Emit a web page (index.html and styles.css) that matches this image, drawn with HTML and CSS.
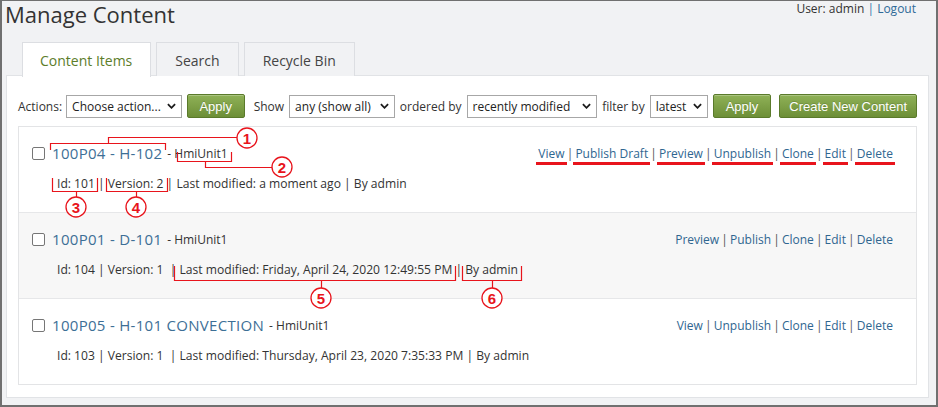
FILE: index.html
```html
<!DOCTYPE html>
<html lang="en">
<head>
<meta charset="utf-8">
<title>Manage Content</title>
<link rel="stylesheet" href="styles.css">
</head>
<body>
<div class="frame">
  <header class="top">
    <h1 class="title">Manage Content</h1>
    <div class="user">User: admin <span class="bar">|</span> <a class="link" href="#">Logout</a></div>
  </header>
  <nav class="tabs">
    <div class="tab active">Content Items</div>
    <div class="tab">Search</div>
    <div class="tab">Recycle Bin</div>
  </nav>
  <section class="panel">
    <div class="toolbar">
      <span class="lbl">Actions:</span>
      <span class="sel w1"><select><option>Choose action...</option></select><svg class="chev" viewBox="0 0 10 6"><path d="M1 1l4 4 4-4"/></svg></span>
      <button class="btn b-apply">Apply</button>
      <span class="lbl l-show">Show</span>
      <span class="sel w2"><select><option>any (show all)</option></select><svg class="chev" viewBox="0 0 10 6"><path d="M1 1l4 4 4-4"/></svg></span>
      <span class="lbl l-mid">ordered by</span>
      <span class="sel w3"><select><option>recently modified</option></select><svg class="chev" viewBox="0 0 10 6"><path d="M1 1l4 4 4-4"/></svg></span>
      <span class="lbl l-mid">filter by</span>
      <span class="sel w4"><select><option>latest</option></select><svg class="chev" viewBox="0 0 10 6"><path d="M1 1l4 4 4-4"/></svg></span>
      <button class="btn b-apply2">Apply</button>
      <button class="btn b-create">Create New Content</button>
    </div>
    <ul class="list">
      <li class="row">
        <div class="line">
          <span class="cb"></span>
          <a class="name" href="#">100P04 - H-102</a>
          <span class="type">- HmiUnit1</span>
          <span class="actions">
            <a class="act mark" href="#">View</a> | <a class="act mark" href="#">Publish Draft</a> | <a class="act mark" href="#">Preview</a> | <a class="act mark" href="#">Unpublish</a> | <a class="act mark" href="#">Clone</a> | <a class="act mark" href="#">Edit</a> | <a class="act mark" href="#">Delete</a>
          </span>
        </div>
        <div class="meta">Id: 101 | Version: 2 | Last modified: a moment ago | By admin</div>
      </li>
      <li class="row alt">
        <div class="line">
          <span class="cb"></span>
          <a class="name" href="#">100P01 - D-101</a>
          <span class="type">- HmiUnit1</span>
          <span class="actions">
            <a class="act" href="#">Preview</a> | <a class="act" href="#">Publish</a> | <a class="act" href="#">Clone</a> | <a class="act" href="#">Edit</a> | <a class="act" href="#">Delete</a>
          </span>
        </div>
        <div class="meta">Id: 104 | Version: 1&nbsp; | Last modified: Friday, April 24, 2020 12:49:55 PM | By admin</div>
      </li>
      <li class="row">
        <div class="line">
          <span class="cb"></span>
          <a class="name" href="#">100P05 - H-101 CONVECTION</a>
          <span class="type">- HmiUnit1</span>
          <span class="actions">
            <a class="act" href="#">View</a> | <a class="act" href="#">Unpublish</a> | <a class="act" href="#">Clone</a> | <a class="act" href="#">Edit</a> | <a class="act" href="#">Delete</a>
          </span>
        </div>
        <div class="meta">Id: 103 | Version: 1&nbsp; | Last modified: Thursday, April 23, 2020 7:35:33 PM | By admin</div>
      </li>
    </ul>
  </section>
  <svg class="notes" width="938" height="407" viewBox="0 0 938 407">
    <g class="br">
      <path d="M50.5 150V143.5H165.5V150M108.5 143.5V137.5H237"/>
      <path d="M177.5 152V161.5H231.5V152M205.5 161.5V167.5H272"/>
      <path d="M52.5 178V191.5H97.5V178M76.5 191.5V197"/>
      <path d="M106.5 178V191.5H167.5V178M136.5 191.5V197"/>
      <path d="M174.5 266V280.5H455.5V266M321.5 280.5V288"/>
      <path d="M462.5 266V280.5H521.5V266M492.5 280.5V288"/>
    </g>
    <g class="num">
      <circle cx="247" cy="138" r="10"/><text x="247" y="143.5">1</text>
      <circle cx="282" cy="167" r="10"/><text x="282" y="172.5">2</text>
      <circle cx="76" cy="207" r="10"/><text x="76" y="212.5">3</text>
      <circle cx="136" cy="207" r="10"/><text x="136" y="212.5">4</text>
      <circle cx="321" cy="298" r="10"/><text x="321" y="303.5">5</text>
      <circle cx="492" cy="298" r="10"/><text x="492" y="303.5">6</text>
    </g>
  </svg>
</div>
</body>
</html>
```

FILE: styles.css
```css
* { box-sizing: border-box; }
html, body { margin: 0; padding: 0; }
body {
  font-family: "Open Sans", "Noto Sans", sans-serif;
  font-size: 12px;
  color: #333;
  background: #f1f2f4;
}
a { text-decoration: none; }

.frame {
  position: relative;
  width: 938px;
  height: 407px;
  border: 2px solid #707070;
  border-top-width: 1px;
  background: #f1f2f4;
  overflow: hidden;
}

.top {
  display: flex;
  justify-content: space-between;
  align-items: flex-start;
  height: 25px;
  padding: 0 20px 0 3px;
}
.title {
  margin: 0;
  font-size: 22px;
  line-height: 26px;
  height: 25px;
  font-weight: 400;
  color: #333;
}
.user {
  font-size: 12px;
  line-height: 16px;
  color: #333;
}
.user .bar { color: #3b78a8; }
.user .link { color: #2f6a98; }

.tabs {
  display: flex;
  gap: 5px;
  margin: 16px 0 0 20px;
  position: relative;
  z-index: 1;
}
.tab {
  height: 34px;
  line-height: 33px;
  padding: 1px 18px 0 18px;
  border: 1px solid #dcdee2;
  border-bottom: none;
  background: #f1f2f4;
  color: #444;
  font-size: 14px;
  margin-bottom: -1px;
}
.tab.active {
  background: #fff;
  color: #5c7d2a;
  padding: 1px 18px 0 17px;
  height: 35px;
}

.panel {
  margin: -1px 7px 0 4px;
  background: #fff;
  border: 1px solid #e1e3e6;
  padding: 18px 11px 12px 11px;
}

.toolbar {
  display: flex;
  align-items: center;
  height: 24px;
}
.lbl { color: #333; white-space: nowrap; }
.l-show { margin-left: 9px; margin-right: 5px; }
.l-mid { margin: 0 5px; }

.sel {
  position: relative;
  display: inline-block;
  height: 23px;
  margin-left: 4px;
}
.sel select {
  appearance: none;
  -webkit-appearance: none;
  width: 100%;
  height: 23px;
  border: 1px solid #a7a7a7;
  border-radius: 0;
  background: #fff;
  font-family: "Open Sans", "Noto Sans", sans-serif;
  font-size: 12px;
  color: #222;
  padding: 0 0 0 5px;
  margin: 0;
}
.sel .chev {
  position: absolute;
  right: 6px;
  top: 8px;
  width: 9px;
  height: 6px;
  fill: none;
  stroke: #1b1b1b;
  stroke-width: 2;
  pointer-events: none;
}
.w1 { width: 116px; }
.w2 { width: 106px; margin-left: 0; }
.w3 { width: 131px; margin-left: 0; }
.w4 { width: 58px; margin-left: 0; }

.btn {
  height: 24px;
  border: 1px solid #5a7a2b;
  border-radius: 2px;
  background: linear-gradient(#8fb157, #6d8f37);
  box-shadow: inset 0 1px 0 rgba(255,255,255,.25);
  color: #fff;
  font-family: "Liberation Sans", Arial, sans-serif;
  font-size: 13px;
  padding: 0;
  text-shadow: 0 -1px 0 rgba(0,0,0,.15);
}
.b-apply { width: 58px; margin-left: 5px; }
.b-apply2 { width: 59px; margin-left: 5px; }
.b-create { width: 138px; margin-left: 8px; }

.list {
  list-style: none;
  margin: 8px 0 0 0;
  padding: 0;
  border: 1px solid #e3e4e6;
}
.row {
  height: 86px;
  padding: 15px 23px 0 13px;
  border-bottom: 1px solid #e6e7e9;
  background: #fff;
}
.row:last-child { border-bottom: none; height: 85px; }
.row.alt { background: #f7f7f7; }

.line {
  display: flex;
  align-items: center;
  height: 22px;
}
.cb {
  width: 13px;
  height: 13px;
  border: 1px solid #767676;
  border-radius: 2px;
  background: #fff;
  margin-right: 7px;
  flex: none;
}
.name {
  font-size: 15px;
  color: #3d6f96;
  letter-spacing: 0.3px;
  white-space: nowrap;
}
.type {
  font-size: 12px;
  color: #333;
  margin-left: 5px;
  white-space: nowrap;
}
.actions {
  margin-left: auto;
  color: #555;
  white-space: nowrap;
  word-spacing: -1px;
}
.act { color: #2f6690; position: relative; word-spacing: 0; }
.act.mark::after {
  content: "";
  position: absolute;
  left: -2px;
  right: -2px;
  bottom: -3px;
  height: 3px;
  background: #e8141c;
}

.meta {
  margin: 11px 0 0 25px;
  line-height: 18px;
  font-size: 12.1px;
  color: #333;
  white-space: nowrap;
}

.notes {
  position: absolute;
  left: -2px;
  top: -1px;
  pointer-events: none;
}
.notes .br path {
  fill: none;
  stroke: #e8141c;
  stroke-width: 1.2;
}
.notes circle {
  fill: #fff;
  stroke: #e8141c;
  stroke-width: 1.3;
}
.notes text {
  font-family: "Liberation Sans", Arial, sans-serif;
  font-weight: bold;
  font-size: 15px;
  fill: #e8141c;
  text-anchor: middle;
}
```
